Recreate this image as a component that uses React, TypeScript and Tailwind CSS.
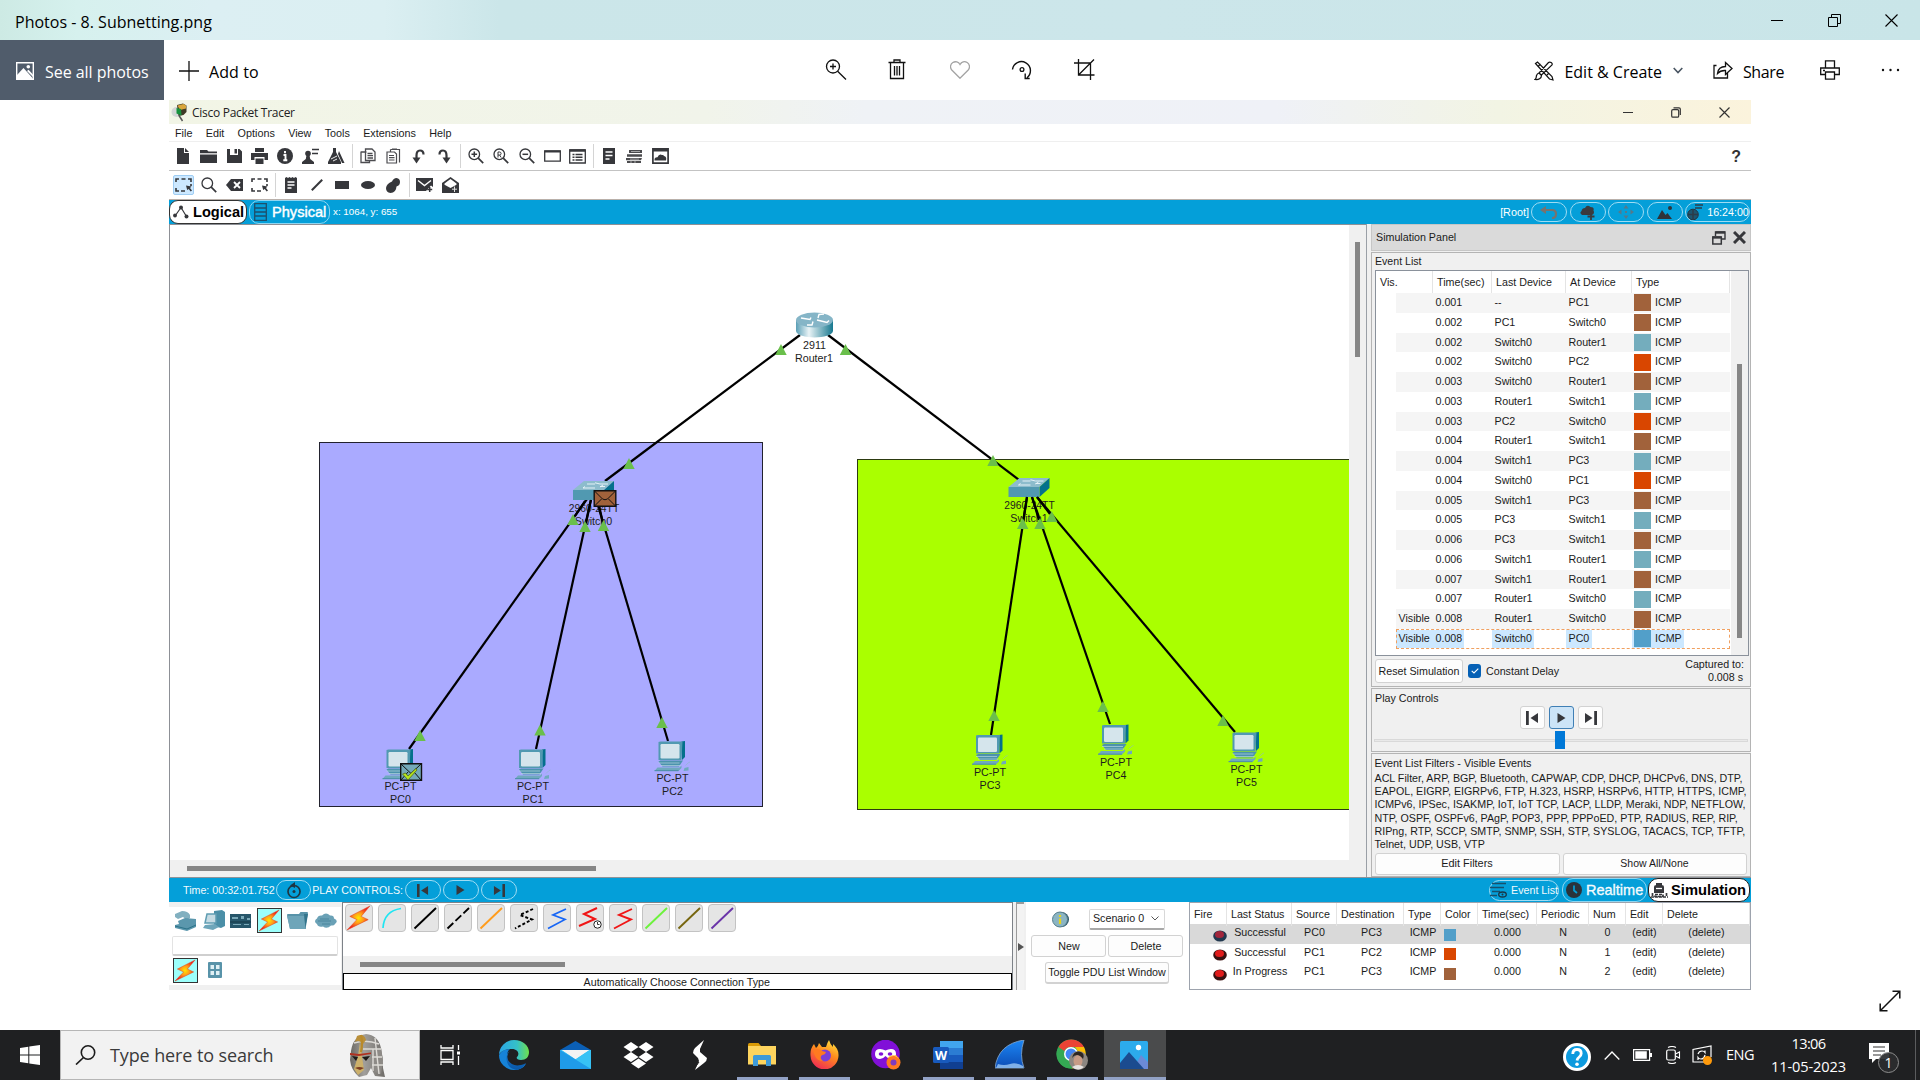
import React from 'react';

type Kids = { children?: React.ReactNode; className?: string };

/* ---------- shared bits ---------- */

const Svg = ({ w, h, vb, className = '', children }: { w: number; h: number; vb?: string; className?: string; children: React.ReactNode }) => (
  <svg width={w} height={h} viewBox={vb ?? `0 0 ${w} ${h}`} fill="none" className={`shrink-0 ${className}`}>
    {children}
  </svg>
);

const Slot = ({ children, className = '' }: Kids) => (
  <div className={`flex h-full w-[25.5px] shrink-0 items-center justify-center ${className}`}>{children}</div>
);
const Sep = () => (
  <div className="flex h-full w-[6px] shrink-0 items-center justify-center">
    <div className="h-[24px] w-px bg-[#d4d4d4]" />
  </div>
);

const D = '#36373b';

/* ---------- Photos window ---------- */

function TitleBar() {
  return (
    <div className="flex h-[40px] items-center justify-between bg-[linear-gradient(90deg,#cdeae4_0%,#d6f1ee_4%,#dceff3_11%,#dbeff2_20%,#cbe6e9_26%,#cce6ea_60%,#c9e5e8_100%)] pl-[15px]">
      <span className="mt-[3px] text-[16px] leading-none tracking-[0.01px]">Photos - 8. Subnetting.png</span>
      <div className="flex items-center pr-[0.500px]">
        <div className="flex w-[57px] justify-center"><div className="h-px w-[12px] bg-black" /></div>
        <div className="flex w-[57px] justify-center">
          <Svg w={13} h={13}><path d="M.5 3.500h9v9h-9zM3.500 3.500V.5h9v9h-3" stroke="#000" /></Svg>
        </div>
        <div className="flex w-[57px] justify-center">
          <Svg w={13} h={13}><path d="M.5 .5l12 12M12.500 .5l-12 12" stroke="#000" strokeWidth="1.100" /></Svg>
        </div>
      </div>
    </div>
  );
}

function PhotosToolbar() {
  return (
    <div className="flex h-[60px] bg-white">
      <div className="flex w-[164px] items-center bg-[#505c6b] pl-[16px] text-white">
        <Svg w={18} h={18} className="mt-[1px]">
          <path d="M.7.7h16.600v16.600H.7z" stroke="#fff" strokeWidth="1.400" />
          <path d="M1 13l6.500-7 9.500 10.500-2 .8H1z" fill="#fff" />
          <circle cx="12.300" cy="4.800" r="1.800" fill="#fff" />
          <path d="M11 9l1.500-1.300L17 12.500V15z" fill="#fff" />
        </Svg>
        <span className="ml-[11px] mt-[4px] whitespace-nowrap text-[16px] leading-none tracking-[-0.04px]">See all photos</span>
      </div>
      <div className="flex w-[648px] items-center pl-[15px]">
        <Svg w={20} h={20} className="mt-[2px]"><path d="M10 0v20M0 10h20" stroke="#111" strokeWidth="1.300" /></Svg>
        <span className="ml-[10px] mt-[4px] text-[16px] leading-none tracking-[0.1px]">Add to</span>
      </div>
      <div className="flex items-center pb-[1px]">
        <div className="flex w-[47px] justify-center">
          <Svg w={22} h={21}>
            <circle cx="8" cy="7.500" r="6.500" stroke="#111" strokeWidth="1.300" />
            <path d="M5 7.500h6M8 4.500v6M12.600 12.200L21 20.500" stroke="#111" strokeWidth="1.300" />
          </Svg>
        </div>
        <div className="flex w-[76px] justify-center">
          <Svg w={18} h={21}>
            <path d="M.5 3.500h17M6 3V1h6v2M2.500 4v15.500h13V4M6.500 7v9.500M9 7v9.500M11.500 7v9.500" stroke="#111" strokeWidth="1.300" />
          </Svg>
        </div>
        <div className="flex w-[50px] justify-center">
          <Svg w={20} h={18}>
            <path d="M10 17.200L1.800 9C-.3 6.500.3 3 2.800 1.500 5.500 0 8.500.8 10 3.500 11.500.8 14.500 0 17.200 1.500 19.700 3 20.300 6.500 18.200 9z" stroke="#a3a3a3" strokeWidth="1.300" />
          </Svg>
        </div>
        <div className="flex w-[74px] justify-center">
          <Svg w={22} h={21}>
            <path d="M1.500 10.500a9 9 0 1 1 14.500 8.200M14.200 14.500v5h4.500" stroke="#111" strokeWidth="1.400" />
            <circle cx="11" cy="10.500" r="1.900" stroke="#111" strokeWidth="1.300" />
          </Svg>
        </div>
        <div className="flex w-[50px] justify-center">
          <Svg w={21} h={21}>
            <path d="M4.500 0v16h16M0 4h16.500v17M4.500 16L20 .5" stroke="#111" strokeWidth="1.300" />
          </Svg>
        </div>
      </div>
      <div className="ml-auto flex items-center pr-[19px]">
        <Svg w={20} h={20} className="mt-[2px]">
          <path d="M1.500 2.500L3.500 1l14.500 14.500 1 3.500-3.500-1zM14.500 1.500c1.500-1.200 4.500.5 3.500 2.500L7.500 14 5 12zM5 12l2.500 2.500c0 3-3 4.500-6.500 4 1.500-1 1-2 1.500-4 .5-1.500 1.500-2.300 2.500-2.500zM4.500 5l2-2M13 14l2-2" stroke="#111" strokeWidth="1.200" />
        </Svg>
        <span className="ml-[10px] mt-[4px] whitespace-nowrap text-[16px] leading-none">Edit &amp; Create</span>
        <Svg w={10} h={7} className="ml-[11px]"><path d="M.7 1l4.300 4.500L9.300 1" stroke="#4a5663" strokeWidth="1.600" /></Svg>
        <Svg w={20} h={18} className="ml-[30px]">
          <path d="M3.500 4.500H1v12.500h13.500V12M4.500 12.500C5 8 8 5.500 12.500 5.500V1.500l6.500 6-6.500 6V9.500c-3.500-.2-6 .8-8 3z" stroke="#111" strokeWidth="1.300" />
        </Svg>
        <span className="ml-[10px] mt-[4px] text-[16px] leading-none tracking-[-0.4px]">Share</span>
        <Svg w={20} h={20} className="ml-[36px]">
          <path d="M5.500 8V.8h9V8M5 14.500H.7V8h18.600v6.500H15M5.500 12h9v7.200h-9zM3 10.500h2" stroke="#111" strokeWidth="1.300" />
        </Svg>
        <Svg w={20} h={4} className="ml-[41px]">
          <circle cx="2" cy="2" r="1.200" fill="#111" /><circle cx="9.500" cy="2" r="1.200" fill="#111" /><circle cx="17" cy="2" r="1.200" fill="#111" />
        </Svg>
      </div>
    </div>
  );
}

/* ---------- Packet Tracer chrome ---------- */

function TracerTitle() {
  return (
    <div className="flex h-[24px] shrink-0 items-center bg-[linear-gradient(90deg,#f2f5e6_0%,#f1f4ea_34%,#eff2f6_44%,#eff1f7_70%,#f2f4e4_84%,#fbf3dc_100%)] pl-[2px]">
      <Svg w={16} h={19}>
        <circle cx="5.500" cy="9" r="5" fill="#d3d6d6" />
        <path d="M6 2l6-1.500 3.500 2v6.500l-3 3-5 1z" fill="#3f3a26" />
        <path d="M6.500 2.500l6-1.500 2.500 1.500v3l-6 1.500z" fill="#d9a63c" />
        <path d="M5.500 5l4.500 1 .5 6.500-5-2z" fill="#16923d" />
        <path d="M8 12.500l3.500 5.500" stroke="#555" strokeWidth="1.500" />
      </Svg>
      <span className="ml-[5px] mt-[1px] text-[12px] leading-none tracking-[-0.28px] text-[#222] [font-family:'Open_Sans',sans-serif]">Cisco Packet Tracer</span>
      <div className="ml-auto flex items-center pr-[3px]">
        <div className="flex w-[48px] justify-center"><div className="h-px w-[10px] bg-[#333]" /></div>
        <div className="flex w-[48px] justify-center">
          <Svg w={10} h={11}><rect x=".7" y="2.700" width="7" height="7.500" rx="1.300" stroke="#333" strokeWidth="1.200" /><path d="M2.500 .8h5.500q1.300 0 1.300 1.300V8" stroke="#333" strokeWidth="1.200" /></Svg>
        </div>
        <div className="flex w-[48px] justify-center">
          <Svg w={11} h={11}><path d="M.5 .5l10 10M10.500 .5l-10 10" stroke="#333" strokeWidth="1.200" /></Svg>
        </div>
      </div>
    </div>
  );
}

function MenuBar() {
  return (
    <div className="flex h-[18px] shrink-0 items-center gap-[13.3px] border-b border-[#efefef] bg-white pl-[6px] pt-[2px] text-[10.8px] leading-none">
      {['File', 'Edit', 'Options', 'View', 'Tools', 'Extensions', 'Help'].map((m) => (
        <span key={m}>{m}</span>
      ))}
    </div>
  );
}

const Lens = ({ children }: Kids) => (
  <Svg w={16} h={16}>
    <circle cx="6.300" cy="6.300" r="5.300" stroke={D} strokeWidth="1.300" />
    <path d="M10.200 10.200l5 5" stroke={D} strokeWidth="1.700" />
    {children}
  </Svg>
);

function ToolRowOne() {
  return (
    <div className="flex h-[29px] shrink-0 items-center border-b border-[#c3c3c3] bg-white pl-[1.500px]">
      <Slot><Svg w={12} h={16}><path d="M0 0h7v5h5v11H0zM8 0l4 4H8z" fill={D} /></Svg></Slot>
      <Slot><Svg w={17} h={13}><path d="M0 0h7l1.500 1.500H17v1.800H0zM0 4.500h17V13H0z" fill={D} /></Svg></Slot>
      <Slot><Svg w={15} h={14}><path d="M0 0h3v6h8V0h1.500L15 2.500V14H0zM7.500 0H10v4.500H7.500z" fill={D} /></Svg></Slot>
      <Slot><Svg w={17} h={16}><path d="M4 0h9v4H4zM0 5h17v7h-3.500V9h-10v3H0zM4.500 10.500h8V16h-8z" fill={D} /></Svg></Slot>
      <Slot><Svg w={16} h={16}><circle cx="8" cy="8" r="8" fill={D} /><path d="M8 3v2.200M6.500 7H8.500v5M6.300 12.300h4" stroke="#fff" strokeWidth="1.900" /></Svg></Slot>
      <Slot><Svg w={17} h={16}><circle cx="6" cy="5.500" r="2.800" fill={D} /><path d="M4.500 7h3l.7 4 3.800 3v2H0v-2l3.800-3z" fill={D} /><path d="M10 1.500h7M10 5.500h6" stroke={D} strokeWidth="1.400" /></Svg></Slot>
      <Slot><Svg w={17} h={16}><path d="M5 0h3v4l5 10v2H0v-2L5 4zM11 3l5.500 12h-2.500L10 6z" fill={D} /><path d="M3 11l6-3M5 13l4-2" stroke="#fff" strokeWidth=".9" /></Svg></Slot>
      <Sep />
      <Slot><Svg w={16} h={16}><path d="M1 4h5.500M1 3.500v11h8.500V12M5.500 1H12l3 3v8.500H5.500zM7.500 5.500h5M7.500 7.700h5.500M7.500 10h5.500" stroke="#4c4c50" strokeWidth="1.300" /></Svg></Slot>
      <Slot><Svg w={15} h={16}><path d="M4.500 1.500h9v13M4.500 1.500V4M1 4h7.500l2 2v9H1zM3 7.500h5M3 9.700h5.500M3 12h5.500M6 0h5" stroke="#4c4c50" strokeWidth="1.200" /></Svg></Slot>
      <Slot><Svg w={13} h={15}><path d="M4.500 10V6.500Q4.500 1.500 8 1.500t3.500 4" stroke={D} strokeWidth="2.200" /><path d="M.5 8.500h8L4.500 14.500z" fill={D} /></Svg></Slot>
      <Slot><Svg w={13} h={15}><path d="M8.500 10V6.500Q8.500 1.500 5 1.500t-3.500 4" stroke={D} strokeWidth="2.200" /><path d="M12.500 8.500h-8l4 6z" fill={D} /></Svg></Slot>
      <Sep />
      <Slot><Lens><path d="M3.500 6.300h5.600M6.300 3.500v5.600" stroke={D} strokeWidth="1.500" /></Lens></Slot>
      <Slot><Lens><path d="M5 9.500V4h1.600q1.500.1 1.500 1.500T6.600 7H5M6.600 7l1.600 2.500" stroke={D} /></Lens></Slot>
      <Slot><Lens><path d="M3.500 6.300h5.600" stroke={D} strokeWidth="1.500" /></Lens></Slot>
      <Slot><Svg w={17} h={12}><path d="M.7 1h15.600v10.200H.7z" stroke={D} strokeWidth="1.300" /><path d="M.5 1.500h16" stroke={D} strokeWidth="2" /></Svg></Slot>
      <Slot><Svg w={17} h={15}><path d="M.7 1h15.600v13H.7z" stroke={D} strokeWidth="1.300" /><path d="M.5 1.500h16" stroke={D} strokeWidth="2.500" /><path d="M3.500 5.500h2M6.500 5.500h7M3.500 8.200h2M6.500 8.200h7M3.500 11h2M6.500 11h7" stroke={D} strokeWidth="1.500" /></Svg></Slot>
      <Sep />
      <Slot><Svg w={12} h={16}><path d="M0 0h12v16H0z" fill={D} /><path d="M2.500 4h7M2.500 7.500h7M2.500 11h4" stroke="#fff" strokeWidth="1.500" /></Svg></Slot>
      <Slot><Svg w={17} h={13}><path d="M3 0h13v3H3zM1 4.300h15v2.500H1zM0 8h16l-1 2.200H0zM1 11h14v2H1z" fill="#4b4b4e" /><path d="M5 1.500h9M4 9.100h9M5 11v2M9 11v2" stroke="#bdbdbd" strokeWidth=".8" /></Svg></Slot>
      <Slot><Svg w={17} h={16}><path d="M.9.900h15.200v14.200H.9z" stroke={D} strokeWidth="1.700" /><path d="M1 2h15" stroke={D} strokeWidth="3" /><path d="M2.500 12.500q-.3-3.500 3-3.300Q7 5.500 10 7q1.500-.5 2 1 3 .5 2 4.500z" fill={D} /></Svg></Slot>
      <span className="ml-auto mr-[10px] mt-[1px] text-[16px] font-bold leading-none text-[#333]">?</span>
    </div>
  );
}

const Marquee = () => (
  <Svg w={17} h={14}>
    <path d="M1 4V1h3M6.500 1h4M13 1h3v3M1 10v3h3M6 13h4M16 6v2" stroke={D} strokeWidth="1.600" />
    <path d="M11 7.500l5.500 1-1.500 1.500 2 2.500-1.300 1-2-2.500-1.500 1z" fill={D} />
  </Svg>
);

function ToolRowTwo() {
  return (
    <div className="flex h-[29px] shrink-0 items-center border-b border-[#b9b0aa] bg-white pl-[1.500px]">
      <Slot><div className="flex h-[20px] w-[21px] items-center justify-center rounded-[2px] border border-[#9fcdf3] bg-[#cce8ff]"><Marquee /></div></Slot>
      <Slot><Lens /></Slot>
      <Slot><Svg w={17} h={12}><path d="M5 0h12v12H5L0 6z" fill={D} /><path d="M8 3l6 6M14 3L8 9" stroke="#fff" strokeWidth="1.800" /></Svg></Slot>
      <Slot><Marquee /></Slot>
      <Sep />
      <Slot><Svg w={12} h={16}><path d="M0 1l1.500-1L3 1l1.500-1L6 1l1.500-1L9 1l1.500-1L12 1v15H0z" fill={D} /><path d="M2.500 5h7M2.500 8h7M2.500 11h4" stroke="#fff" strokeWidth="1.400" /></Svg></Slot>
      <Slot><Svg w={12} h={12}><path d="M.8 11.200L11.200.8" stroke={D} strokeWidth="2" /></Svg></Slot>
      <Slot><div className="h-[8px] w-[14px] bg-[#36373b]" /></Slot>
      <Slot><div className="h-[8px] w-[14px] rounded-[50%] bg-[#36373b]" /></Slot>
      <Slot><Svg w={14} h={15}><path d="M6 3.500q1.500-3.500 4.500-3.500 3.500.5 3.500 4t-3.500 4.500Q10 15 4.500 15 0 14.500 0 10 .5 5.500 6 3.500z" fill={D} /></Svg></Slot>
      <Sep />
      <Slot><Svg w={17} h={14}><path d="M0 0h17v9l-2-1.500L10 13H0z" fill={D} /><path d="M2 2.500l6.500 5 6.500-5" stroke="#fff" strokeWidth="1.400" /><path d="M13.700 9v5M11.200 11.500h5" stroke={D} strokeWidth="1.500" /></Svg></Slot>
      <Slot><Svg w={17} h={16}><path d="M8.500 0L17 6v10H0V6z" fill={D} /><path d="M2.500 6.500l6-4.500 6 4.500v1.200l-6 3.300-6-3.300z" fill="#fff" /><path d="M12.500 9.500v5.500M10 12.200h5" stroke="#ddd" strokeWidth="1" /></Svg></Slot>
    </div>
  );
}

const Pill = ({ children, className = '' }: Kids) => (
  <div className={`flex shrink-0 items-center justify-center rounded-full border border-[#9fdcf3] ${className}`}>{children}</div>
);

function ViewBar() {
  return (
    <div className="flex h-[24px] shrink-0 items-center bg-[#049fd9] text-white">
      <div className="flex h-[24px] w-[78px] items-center rounded-[9px] border border-[#333] bg-white pl-[3px] text-black">
        <Svg w={16} h={14}><path d="M2 11L8 2.500l5.500 9" stroke={D} strokeWidth="1.200" /><circle cx="2" cy="10.500" r="1.900" fill={D} /><circle cx="8" cy="2.500" r="2" fill={D} /><circle cx="13.500" cy="11.500" r="2" fill={D} /></Svg>
        <span className="ml-[4px] mt-[1px] text-[14.6px] font-bold leading-none">Logical</span>
      </div>
      <div className="ml-[2px] flex h-[24px] w-[81px] items-center rounded-[10px] border border-[#8ed6f2] pl-[4px]">
        <Svg w={13} h={18}><path d="M.7.700h11.600v16.600H.7zM1 5h11M1 9h11M1 13h11" stroke="#1d4f6b" strokeWidth="1.300" /></Svg>
        <span className="ml-[5px] mt-[1px] text-[14.6px] leading-none [-webkit-text-stroke:0.4px_white]">Physical</span>
      </div>
      <span className="ml-[3px] whitespace-nowrap text-[9.8px] leading-none">x: 1064, y: 655</span>
      <div className="ml-auto flex items-center pr-[1px]">
        <span className="text-[10.8px] leading-none">[Root]</span>
        <Pill className="ml-[2px] h-[20px] w-[36px]"><Svg w={18} h={13}><path d="M5 4h7q4 0 4 4t-4 4" stroke="#77736f" strokeWidth="2.200" /><path d="M6 0v8L0 4z" fill="#77736f" /></Svg></Pill>
        <Pill className="ml-[2.700px] h-[20px] w-[36px]"><Svg w={18} h={15}><path d="M3 10Q0 8 2.500 6 3 3 6 3q2-4 5.500-1 4 0 3 3.500Q16 9 13 10z" fill="#3a3a3e" /><path d="M12 8v7M8.500 11.500h7" stroke="#3a3a3e" strokeWidth="1.800" /></Svg></Pill>
        <Pill className="ml-[2.700px] h-[20px] w-[36px]"><Svg w={16} h={14}><path d="M8 0l2.500 3.500h-5zM8 14l2.500-3.500h-5zM0 7l3.500-2.500v5zM16 7l-3.500-2.500v5zM7 6h2v2H7z" fill="#56798a" /></Svg></Pill>
        <Pill className="ml-[2.700px] h-[20px] w-[36px]"><Svg w={16} h={13}><path d="M0 13L5 4l3.500 5L10.500 7 15 13z" fill="#2f3338" /><circle cx="13" cy="2" r="2" fill="#2f3338" /></Svg></Pill>
        <Pill className="ml-[2px] h-[20px] w-[65px] gap-[3px]">
          <Svg w={18} h={16}><circle cx="7" cy="10.500" r="5.300" fill="#1d566f" stroke="#24343f" /><path d="M2 10.500h10M7 5.500v10M9 4h7M9 1h8" stroke="#2c3c48" strokeWidth="1.500" /></Svg>
          <span className="text-[10.7px] leading-none">16:24:00</span>
        </Pill>
      </div>
    </div>
  );
}

/* ---------- Topology canvas ---------- */

/* Drawing coordinates are desktop pixels; the viewBox starts at the canvas corner. */
const LINKS: [number, number, number, number][] = [
  [800, 335, 605, 481], [828, 335, 1019, 480],
  [587, 499, 409, 749], [591, 499, 536, 749], [597, 502, 668, 741],
  [1027, 497, 991, 735], [1032, 497, 1110, 724], [1037, 497, 1235, 732],
];
const UP: [number, number][] = [
  [781, 350], [845.5, 350], [629, 464], [573, 520], [585, 527], [603.5, 526], [420, 736], [540, 730.5], [662, 723],
  [993, 461], [1022.7, 524], [1040, 524], [1051.7, 517], [994, 716], [1103, 707], [1223, 721],
];
const PCS: [number, number, string][] = [
  [386.5, 749.5, 'PC0'], [519, 749.5, 'PC1'], [658.5, 741.5, 'PC2'], [976, 735, 'PC3'], [1102, 725, 'PC4'], [1232.5, 732.5, 'PC5'],
];

const Caption = ({ x, y, size = 10.7, children }: { x: number; y: number; size?: number; children: string }) => (
  <text x={x} y={y} textAnchor="middle" fontSize={size} fill="#1c1c1c">{children}</text>
);

const Pc = ({ x, y, name }: { x: number; y: number; name: string }) => (
  <g>
    <g transform={`translate(${x} ${y})`}>
      <path d="M23 0l3.500-.5v16l-3 3z" fill="#04708c" />
      <path d="M0 .500L2 0h22l-1 18.500H0z" fill="#5199b1" />
      <rect x="2" y="2.500" width="19" height="14.500" rx="1.200" fill="#d5e5ec" />
      <path d="M0 20l2-1h22.500l-4 6H4z" fill="#4b93ad" />
      <path d="M0 21.500h21M2 24h20" stroke="#b7d5e0" strokeWidth=".7" />
      <path d="M-1 26h22l2-2v2.500L20 29.500H-4z" fill="#6fa9be" />
      <path d="M-4 29.200h24" stroke="#4b8ca5" />
      <path d="M26 26.500l4-1v3.500l-5 .5z" fill="#6fa9be" />
      <path d="M27 24q3-3.500 4.500-3.500" stroke="#8bb9ca" strokeWidth=".6" />
    </g>
    <Caption x={x + 14} y={y + 40.500}>PC-PT</Caption>
    <Caption x={x + 14} y={y + 53.500}>{name}</Caption>
  </g>
);

const Switch = ({ x, y, name }: { x: number; y: number; name: string }) => (
  <g>
    <g transform={`translate(${x} ${y})`}>
      <path d="M0 9L11 0h30L31 9z" fill="#8dbccc" />
      <path d="M31 9L41 0v10L31 19z" fill="#04708c" />
      <path d="M0 9h31v10H0z" fill="#5199b1" />
      <path d="M14 3h8M22 1.800l5 1.200h8M27 5.500h5M10 7h12M30 4l-3 2M12 5.500l-2 1.500" stroke="#eef7fa" strokeWidth=".9" />
    </g>
    <Caption x={x + 21} y={y + 30.500} size={10.3}>2960-24TT</Caption>
    <Caption x={x + 20.500} y={y + 43.800}>{name}</Caption>
  </g>
);

function Canvas() {
  return (
    <div className="flex min-w-0 flex-1 flex-col border-l border-t border-[#8d9096]">
      <div className="flex min-h-0 flex-1">
        <svg width="1179" height="635" viewBox="170 225 1179 635" fill="none" className="shrink-0 bg-white">
          <defs>
            <linearGradient id="can" x1="0" x2="1">
              <stop offset="0" stopColor="#5a9fb6" /><stop offset=".35" stopColor="#e9f3f6" /><stop offset="1" stopColor="#16788f" />
            </linearGradient>
          </defs>
          <rect x="319.500" y="442.500" width="443" height="364" fill="#aaaaff" stroke="#22222e" />
          <rect x="857.500" y="459.500" width="520" height="350" fill="#aaff00" stroke="#2c3a10" />
          <g stroke="#000" strokeWidth="2.200">
            {LINKS.map(([a, b, c, d]) => <path key={`${a}-${c}`} d={`M${a} ${b}L${c} ${d}`} />)}
          </g>
          <path d="M796 320v11c1 8.500 36 8.500 37 0v-11z" fill="url(#can)" />
          <ellipse cx="814.500" cy="320" rx="18.500" ry="7.500" fill="#85b5c7" />
          <path d="M801 318l9 1.500 1-2M818 318l1-3.500 5-.5M813 321.500l-1 3.500-5 0M817 320l10 2.500 2-2" stroke="#fff" strokeWidth="1.400" />
          <Caption x={814.500} y={349}>2911</Caption>
          <Caption x={814} y={362}>Router1</Caption>
          <Switch x={573} y={481} name="Switch0" />
          <Switch x={1008.500} y={478} name="Switch1" />
          <g stroke="#000" strokeWidth="2.200">
            <path d="M585 501L575 516M591 500L586 523M599 505L603 524M1027 497L1023 522M1032 497L1039 520M1037 497L1050 514" />
          </g>
          {PCS.map(([x, y, n]) => <Pc key={n} x={x} y={y} name={n} />)}
          {UP.map(([x, y]) => <path key={`${x}`} d={`M${x} ${y - 6}l5.700 11h-11.400z`} fill="#6abf4b" />)}
          <g transform="translate(593.500 490)">
            <path d="M.7.700h21.600v15.600H.7z" fill="#a1623b" stroke="#111" strokeWidth="1.400" />
            <path d="M1 1l8 8q2.500 1.500 5 0l8-8M1 16l7-7M22 16l-7-7" stroke="#111" strokeWidth="1" />
          </g>
          <g transform="translate(400 763)">
            <path d="M.7.700h20.800v16.600H.7z" fill="#74a9b8" stroke="#111" strokeWidth="1.400" />
            <path d="M1 1l10 9.500L21 1M1 17l7-8M21 17l-7-8" stroke="#111" strokeWidth="1" />
            <path d="M2.500 11l3-1 2.500 3 8-7.500 1 1.500-9 10z" fill="#b5e61d" stroke="#4c5c15" strokeWidth=".7" />
          </g>
        </svg>
        <div className="flex flex-1 justify-center bg-[#f0f0f0] pt-[17px]">
          <div className="h-[115px] w-[5px] bg-[#868686]" />
        </div>
      </div>
      <div className="flex h-[17px] shrink-0 items-center bg-[#f0f0f0] pl-[17px]">
        <div className="h-[5px] w-[409px] bg-[#868686]" />
      </div>
    </div>
  );
}

/* ---------- Simulation panel ---------- */

const BROWN = 'bg-[#a1623b]';
const TEAL = 'bg-[#74adbd]';
const ORANGE = 'bg-[#d94600]';
const BLUE = 'bg-[#529fc9]';

const EVENTS: [string, string, string, string, string][] = [
  ['', '0.001', '--', 'PC1', BROWN],
  ['', '0.002', 'PC1', 'Switch0', BROWN],
  ['', '0.002', 'Switch0', 'Router1', TEAL],
  ['', '0.002', 'Switch0', 'PC2', ORANGE],
  ['', '0.003', 'Switch0', 'Router1', BROWN],
  ['', '0.003', 'Router1', 'Switch1', TEAL],
  ['', '0.003', 'PC2', 'Switch0', ORANGE],
  ['', '0.004', 'Router1', 'Switch1', BROWN],
  ['', '0.004', 'Switch1', 'PC3', TEAL],
  ['', '0.004', 'Switch0', 'PC1', ORANGE],
  ['', '0.005', 'Switch1', 'PC3', BROWN],
  ['', '0.005', 'PC3', 'Switch1', TEAL],
  ['', '0.006', 'PC3', 'Switch1', BROWN],
  ['', '0.006', 'Switch1', 'Router1', TEAL],
  ['', '0.007', 'Switch1', 'Router1', BROWN],
  ['', '0.007', 'Router1', 'Switch0', TEAL],
  ['Visible', '0.008', 'Router1', 'Switch0', BROWN],
  ['Visible', '0.008', 'Switch0', 'PC0', BLUE],
];

const FILTERS = [
  'ACL Filter, ARP, BGP, Bluetooth, CAPWAP, CDP, DHCP, DHCPv6, DNS, DTP,',
  'EAPOL, EIGRP, EIGRPv6, FTP, H.323, HSRP, HSRPv6, HTTP, HTTPS, ICMP,',
  'ICMPv6, IPSec, ISAKMP, IoT, IoT TCP, LACP, LLDP, Meraki, NDP, NETFLOW,',
  'NTP, OSPF, OSPFv6, PAgP, POP3, PPP, PPPoED, PTP, RADIUS, REP, RIP,',
  'RIPng, RTP, SCCP, SMTP, SNMP, SSH, STP, SYSLOG, TACACS, TCP, TFTP,',
  'Telnet, UDP, USB, VTP',
];

const Btn = ({ children, className = '', pressed }: Kids & { pressed?: boolean }) => (
  <div className={`flex shrink-0 items-center justify-center whitespace-nowrap rounded-[3px] border leading-none ${pressed ? 'border-[#3f7fb5] bg-[#cce4f7]' : 'border-[#d2d2d2] bg-[#fdfdfd]'} ${className}`}>{children}</div>
);

const Back = ({ s = 12 }: { s?: number }) => <Svg w={s + 1} h={s + 2} vb="0 0 13 14"><path d="M0 0h2.800v14H0z" fill={D} /><path d="M12 2v10L4.500 7z" fill={D} /></Svg>;
const Play = () => <Svg w={9} h={10}><path d="M.5 0v10L8.500 5z" fill={D} /></Svg>;
const Fwd = ({ s = 12 }: { s?: number }) => <Svg w={s + 1} h={s + 2} vb="0 0 13 14"><path d="M10.200 0H13v14h-2.800z" fill={D} /><path d="M1 2v10l7.500-5z" fill={D} /></Svg>;

function EventTable() {
  return (
    <div className="ml-[3px] flex h-[386px] w-[374px] shrink-0 border border-[#8a919b] bg-white">
      <div className="w-[355px] shrink-0">
        <div className="grid h-[22px] grid-cols-[57px_59px_74px_66px_98px] items-stretch leading-[22px] [&>span]:border-r [&>span]:border-[#e4e4e4]">
          <span className="pl-[4px]">Vis.</span>
          <span className="pl-[4px] tracking-[0.05px]">Time(sec)</span>
          <span className="pl-[4px]">Last Device</span>
          <span className="pl-[4px]">At Device</span>
          <span className="pl-[4px]">Type</span>
        </div>
        {EVENTS.map(([vis, time, last, at, color], i) => {
          const sel = i === EVENTS.length - 1;
          const hl = sel ? 'bg-[#cce8ff]' : '';
          return (
            <div
              key={i}
              className={`ml-[20px] grid h-[19.770px] w-[334px] grid-cols-[37px_59px_74px_66px_98px] items-center text-[10.7px] leading-[19.770px] ${i % 2 === 0 ? 'bg-[#f5f5f5]' : 'bg-white'} ${sel ? 'outline-1 -outline-offset-1 outline-dashed outline-[#f0a060]' : ''}`}
            >
              <span className={`flex h-[18px] items-center pl-[2.500px] ${hl}`}>{vis}</span>
              <span className="flex h-[18px]"><span className={`flex items-center pl-[2.500px] pr-[2px] ${hl}`}>{time}</span></span>
              <span className="flex h-[18px]"><span className={`flex items-center px-[2.500px] ${hl}`}>{last}</span></span>
              <span className="flex h-[18px]"><span className={`flex items-center px-[2.500px] ${hl}`}>{at}</span></span>
              <span className="flex h-[18px]">
                <span className={`flex items-center gap-[4px] pl-[2px] pr-[2px] ${hl}`}>
                  <span className={`h-[17px] w-[17px] ${color}`} />ICMP
                </span>
              </span>
            </div>
          );
        })}
      </div>
      <div className="flex w-[17px] shrink-0 justify-center bg-[#f0f0f0] pt-[93px]">
        <div className="h-[274px] w-[5px] bg-[#868686]" />
      </div>
    </div>
  );
}

function SimulationPanel() {
  return (
    <div className="flex w-[385px] shrink-0 flex-col border-l border-[#9a9fa6] bg-[#f0f0f0] pl-[4px] text-[10.7px]">
      <div className="flex h-[27px] shrink-0 items-center border border-[#c6c6c6] bg-[#dadada] pl-[4px]">
        <span>Simulation Panel</span>
        <div className="ml-auto flex items-center gap-[7px] pr-[4px]">
          <Svg w={14} h={14}><path d="M3.500 5V1h9.500v7H10" stroke={D} strokeWidth="1.400" /><path d="M3.500 1.500H13" stroke={D} strokeWidth="2.400" /><path d="M.8 6h8.500v7H.8z" stroke={D} strokeWidth="1.500" /><path d="M.5 6.500h9" stroke={D} strokeWidth="2.300" /></Svg>
          <Svg w={13} h={13}><path d="M1 1l11 11M12 1L1 12" stroke={D} strokeWidth="3" /></Svg>
        </div>
      </div>
      <div className="mt-[1px] flex h-[435px] shrink-0 flex-col border border-[#b4b4b4]">
        <span className="flex h-[17px] shrink-0 items-center pl-[3px] text-[10.6px]">Event List</span>
        <EventTable />
        <div className="flex flex-1 items-center pl-[3px]">
          <Btn className="h-[24px] w-[88px]">Reset Simulation</Btn>
          <div className="ml-[5px] flex h-[14px] w-[13px] items-center justify-center rounded-[3px] bg-[#0560b5]">
            <Svg w={8} h={6}><path d="M.7 2.800L3 5l4.300-4.300" stroke="#fff" strokeWidth="1.100" /></Svg>
          </div>
          <span className="ml-[5px]">Constant Delay</span>
          <div className="ml-auto flex flex-col items-end pr-[6px] leading-[13px]">
            <span>Captured to:</span>
            <span className="pr-[1px]">0.008 s</span>
          </div>
        </div>
      </div>
      <div className="mt-px flex h-[64px] shrink-0 flex-col border border-[#b4b4b4]">
        <span className="flex h-[17px] shrink-0 items-center pl-[3px] pt-[2px]">Play Controls</span>
        <div className="flex gap-[4px] pl-[148px]">
          <Btn className="h-[23px] w-[25px]"><Back /></Btn>
          <Btn pressed className="h-[23px] w-[25px]"><Play /></Btn>
          <Btn className="h-[23px] w-[25px]"><Fwd /></Btn>
        </div>
        <div className="mx-[2px] mt-[2px] flex h-[18px] items-center">
          <div className="h-[3px] flex-1 border border-[#d9d9d9] bg-[#e9e9e9]" />
          <div className="h-[18px] w-[10px] bg-[#0078d7]" />
          <div className="h-[3px] w-[183px] border border-[#d9d9d9] bg-[#e9e9e9]" />
        </div>
      </div>
      <div className="mt-px flex min-h-0 flex-1 flex-col border border-[#b4b4b4] pl-[2.500px]">
        <span className="flex h-[18px] shrink-0 items-center text-[10.8px]">Event List Filters - Visible Events</span>
        <div className="flex flex-col whitespace-nowrap leading-[13.200px]">
          {FILTERS.map((l) => <span key={l}>{l}</span>)}
        </div>
        <div className="mt-[1.500px] flex gap-[3px]">
          <Btn className="h-[22px] w-[185px] text-[10.9px]">Edit Filters</Btn>
          <Btn className="h-[22px] w-[184px] text-[10.5px]">Show All/None</Btn>
        </div>
      </div>
    </div>
  );
}

/* ---------- Lower bar and panels ---------- */

function TimeBar() {
  return (
    <div className="flex h-[24px] shrink-0 items-center bg-[#049fd9] pl-[14px] text-[10.7px] leading-none text-[#f1fafd]">
      <span className="whitespace-nowrap">Time: 00:32:01.752</span>
      <Pill className="ml-[1.500px] h-[20px] w-[35px]">
        <Svg w={16} h={17}><circle cx="8" cy="9.500" r="6" stroke="#1f3643" strokeWidth="1.700" /><circle cx="8" cy="9.500" r="1.500" fill="#1f3643" /><path d="M4 3.500L9 0v6z" fill="#1f3643" /></Svg>
      </Pill>
      <span className="ml-[1px] whitespace-nowrap text-[10.6px]">PLAY CONTROLS:</span>
      <Pill className="ml-[1.500px] h-[20px] w-[36px]"><Back s={11} /></Pill>
      <Pill className="ml-[2px] h-[20px] w-[36px]"><Play /></Pill>
      <Pill className="ml-[2px] h-[20px] w-[36px]"><Fwd s={11} /></Pill>
      <div className="ml-auto flex h-full items-center pr-[1px]">
        <Pill className="h-[21px] w-[70px] gap-[4px]">
          <Svg w={17} h={16}><path d="M2 1.500h14M0 5.500h14M2 9.500h8M0 13.500h7" stroke="#17506c" strokeWidth="1.600" /><ellipse cx="12.500" cy="12.500" rx="3.800" ry="2.500" stroke="#17384a" strokeWidth="1.300" /><circle cx="12.500" cy="12.500" r="1" fill="#17384a" /></Svg>
          <span className="whitespace-nowrap">Event List</span>
        </Pill>
        <div className="ml-[3px] flex h-[24px] w-[85px] items-center rounded-[11px] border border-[#8ed6f2] pl-[3px]">
          <Svg w={16} h={16}><circle cx="8" cy="8" r="8" fill="#2a333b" /><path d="M8 3.500V8.500l3 2.500" stroke="#049fd9" strokeWidth="1.700" /></Svg>
          <span className="ml-[4px] text-[14.5px] [-webkit-text-stroke:0.3px_white]">Realtime</span>
        </div>
        <div className="ml-[1px] flex h-[24px] w-[102px] items-center rounded-[10px] border border-[#222] bg-white pl-[2px] text-black">
          <Svg w={17} h={15}><path d="M5 0h6v2.500H5zM3 4q0-2 2-2h6q2 0 2 2v6H3z" fill={D} /><path d="M5 5.500h6" stroke="#fff" strokeWidth="1.300" /><path d="M1.500 10v3.500M0 14h17M15.500 10v3.500M4 11.500h8v2H4z" stroke={D} strokeWidth="1.700" strokeDasharray="3 1" /></Svg>
          <span className="ml-[3px] text-[14.7px] font-bold">Simulation</span>
        </div>
      </div>
    </div>
  );
}

const Bolt = ({ s = 24 }: { s?: number }) => (
  <svg width={s} height={s} viewBox="0 0 24 24" className="shrink-0">
    <defs>
      <radialGradient id="bolt"><stop offset="0" stopColor="#ffe900" /><stop offset=".45" stopColor="#ff9a1a" /><stop offset="1" stopColor="#f01c1c" /></radialGradient>
    </defs>
    <path d="M22 1L3.500 10.500l6.500 3L1 23l19.500-9.500-6.500-3z" fill="url(#bolt)" stroke="#e2451b" strokeWidth=".5" />
  </svg>
);

function DevicePicker() {
  return (
    <div className="flex w-[172px] shrink-0 flex-col border-y-[5px] border-[#f0f0f0] bg-white">
      <div className="flex h-[27px] items-center justify-between pl-[5px] pr-[4px]">
        <Svg w={23} h={20}><path d="M1 6V3l7-3q6 0 8 4v3l-3 2-4-3-5 2z" fill="#82b0c0" /><path d="M4 10l7-3 11 1v8l-9 4-12-3v-3l4-1z" fill="#5b97ad" /><path d="M1 15l12 3 9-4" stroke="#2b7288" /></Svg>
        <Svg w={22} h={21}><path d="M11 1l8-1 3 2v14l-4 2-7-2z" fill="#4b8fa7" /><path d="M4 4h9v9H2z" fill="#c6dbe3" stroke="#5f9db2" strokeWidth="1.500" /><path d="M2 15l10-1 4 3-6 3-10-2z" fill="#6ea6ba" /></Svg>
        <Svg w={21} h={16}><path d="M0 1h21v14H0z" fill="#27566a" /><path d="M2 4h6v2H2zM11 3h3v3h-3zM17 5h3v2h-3zM3 11h8v1H3zM14 11h5v1h-5z" fill="#7ba9b8" /><path d="M0 9h21" stroke="#163947" /></Svg>
        <div className="flex h-[25px] w-[25px] items-center justify-center border border-[#333] bg-[#9cfffb]"><Bolt s={23} /></div>
        <Svg w={21} h={17}><path d="M0 3q0-1 1-1h11l1.500-2H20q1 0 1 1l-3 16H3z" fill="#5893a9" /><path d="M0 4h17l2 13H3z" fill="#6ea5b9" /><path d="M17 2h4l-2.500 15z" fill="#34758c" /></Svg>
        <Svg w={23} h={15}><path d="M3 11Q-1 8 3 5.500 4 2 8 2.500q4-4 8 0 4-.5 4 3 5 2 1 5.500-1 2-4 1.500-4 4-8 1-5 1-6-2.500z" fill="#6aa1b6" /><path d="M6 6h9M4 8h13M8 11h8" stroke="#4a869d" /></Svg>
      </div>
      <div className="mx-[3px] mt-[2px] h-[20px] rounded-[2px] border border-b-2 border-[#e3e3e3] border-b-[#cfcfcf] bg-white" />
      <div className="flex flex-1 items-center pl-[4px]">
        <div className="flex h-[25px] w-[25px] items-center justify-center border border-[#333] bg-[#9cfffb]"><Bolt s={23} /></div>
        <Svg w={14} h={16} className="ml-[10px]"><rect width="14" height="16" rx="1" fill="#5893a9" /><path d="M2.500 3h3.500v4H2.500zM8 3h3.500v4H8zM2.500 9h3.500v4H2.500zM8 9h3.500v4H8z" fill="#dff0f5" /></Svg>
      </div>
    </div>
  );
}

const DIAG = 'M2.500 23.500L24 3';
const ZIG = 'M22 4L9 10l12 4.500L4 23.500';
const CABLES: React.ReactNode[] = [
  <Bolt s={26} />,
  <Svg w={26} h={26}><path d="M4 23Q5 6 22 3.500" stroke="#1fe5f2" strokeWidth="1.700" /></Svg>,
  <Svg w={26} h={26}><path d={DIAG} stroke="#000" strokeWidth="1.900" /></Svg>,
  <Svg w={26} h={26}><path d={DIAG} stroke="#000" strokeWidth="1.900" strokeDasharray="8 3" /></Svg>,
  <Svg w={26} h={26}><path d={DIAG} stroke="#ff9c1c" strokeWidth="1.900" /></Svg>,
  <Svg w={26} h={26}><path d={ZIG} stroke="#000" strokeWidth="1.900" strokeDasharray="3 2" /></Svg>,
  <Svg w={26} h={26}><path d={ZIG} stroke="#1766f5" strokeWidth="1.700" /></Svg>,
  <Svg w={26} h={26}><path d="M20 3L7 9l11 5L2 21" stroke="#f01515" strokeWidth="2" /><circle cx="20.500" cy="19.500" r="3.700" fill="#fff" stroke="#222" /><path d="M20.500 17v2.500h2" stroke="#222" strokeWidth=".9" /></Svg>,
  <Svg w={26} h={26}><path d={ZIG} stroke="#f01515" strokeWidth="1.900" /></Svg>,
  <Svg w={26} h={26}><path d={DIAG} stroke="#6cf23c" strokeWidth="1.900" /></Svg>,
  <Svg w={26} h={26}><path d={DIAG} stroke="#77660f" strokeWidth="1.900" /></Svg>,
  <Svg w={26} h={26}><path d={DIAG} stroke="#6a34a8" strokeWidth="1.900" /></Svg>,
];

function Connections() {
  return (
    <div className="flex w-[671px] shrink-0 flex-col border-l border-r border-t border-[#7d8288] bg-white">
      <div className="flex h-[53px] items-start gap-[5px] pl-[2px] pt-[1px]">
        {CABLES.map((c, i) => (
          <div key={i} className="flex h-[28px] w-[28px] shrink-0 items-center justify-center rounded-[4px] border border-[#c3c3c3] bg-[#e5e5e5]">{c}</div>
        ))}
      </div>
      <div className="flex h-[17px] items-center bg-[#f0f0f0] pl-[17px]"><div className="h-[5px] w-[205px] bg-[#868686]" /></div>
      <div className="flex flex-1 items-center justify-center border border-black pr-[1px] pt-[2px] text-[10.7px] leading-none">Automatically Choose Connection Type</div>
    </div>
  );
}

function Scenario() {
  return (
    <div className="flex w-[163px] shrink-0 flex-col items-center bg-white text-[10.7px]">
      <div className="mt-[7px] flex h-[20px] w-full items-center pl-[26px]">
        <Svg w={17} h={17}><circle cx="9.500" cy="8.500" r="7.500" fill="#2d5766" /><circle cx="8" cy="8.500" r="7.500" fill="#8bb5c3" stroke="#577f8d" /><path d="M8 4v2M8 7.500v5.500" stroke="#e6d51e" strokeWidth="2.200" /></Svg>
        <div className="ml-[20px] flex h-[21px] w-[76px] items-center justify-between rounded-[2px] border border-b-2 border-[#d8d8d8] border-b-[#a8a8a8] pl-[3px] pr-[5px]">
          <span className="whitespace-nowrap leading-none">Scenario 0</span>
          <Svg w={8} h={5}><path d="M.5.500L4 4 7.500.5" stroke="#555" /></Svg>
        </div>
      </div>
      <div className="mt-[6px] flex w-full gap-[2px] pl-[5.500px]">
        <Btn className="h-[22px] w-[75px]">New</Btn>
        <Btn className="h-[22px] w-[75px]">Delete</Btn>
      </div>
      <Btn className="mr-[1px] mt-[5px] h-[22px] w-[124px] border-b-2">Toggle PDU List Window</Btn>
    </div>
  );
}

const PDUS: [string, string, string, string, string][] = [
  ['Successful', 'PC0', 'PC3', BLUE, '0'],
  ['Successful', 'PC1', 'PC2', ORANGE, '1'],
  ['In Progress', 'PC1', 'PC3', BROWN, '2'],
];

function PduTable() {
  return (
    <div className="flex-1 border border-[#9da3ad] bg-white text-[10.7px]">
      <div className="grid h-[21px] grid-cols-[37px_65px_45px_67px_37px_37px_59px_52px_37px_37px_87px] leading-[22.500px] [&>span]:whitespace-nowrap [&>span]:border-r [&>span]:border-[#e4e4e4] [&>span]:pl-[4px]">
        {['Fire', 'Last Status', 'Source', 'Destination', 'Type', 'Color', 'Time(sec)', 'Periodic', 'Num', 'Edit', 'Delete'].map((h) => <span key={h}>{h}</span>)}
      </div>
      {PDUS.map(([st, src, dst, color, num], i) => (
        <div key={num} className={`grid h-[19.700px] grid-cols-[37px_65px_45px_67px_37px_37px_59px_52px_37px_37px_87px] text-center leading-[16.500px] ${i === 0 ? 'bg-[#d9d9d9]' : ''}`}>
          <span className="flex items-end justify-end pb-[2px]"><Svg w={14} h={13}><ellipse cx="7" cy="7" rx="6.800" ry="5.500" fill={i === 0 ? '#22384f' : '#3a1111'} /><ellipse cx="6.500" cy="5.500" rx="4.500" ry="3.500" fill={i === 0 ? '#a1253b' : '#e01b1b'} /></Svg></span>
          <span className="whitespace-nowrap pl-px">{st}</span>
          <span>{src}</span>
          <span className="pl-[2px]">{dst}</span>
          <span className="pl-px">ICMP</span>
          <span className="flex items-end pl-[3px]"><span className={`mb-[3px] h-[12px] w-[12px] ${color}`} /></span>
          <span>0.000</span>
          <span>N</span>
          <span>{num}</span>
          <span>(edit)</span>
          <span>(delete)</span>
        </div>
      ))}
    </div>
  );
}

function PacketTracer() {
  return (
    <div className="ml-[169px] flex h-[889.500px] w-[1582px] flex-col bg-white text-[#1b1b1b] [font-family:'Liberation_Sans',Arial,sans-serif]">
      <TracerTitle />
      <MenuBar />
      <ToolRowOne />
      <ToolRowTwo />
      <ViewBar />
      <div className="flex h-[654px] shrink-0 border-b border-[#8f9399]">
        <Canvas />
        <SimulationPanel />
      </div>
      <TimeBar />
      <div className="flex min-h-0 flex-1 bg-[#f0f0f0]">
        <DevicePicker />
        <div className="w-px" />
        <Connections />
        <div className="ml-[3px] flex w-[11px] items-center justify-center border-l border-t-2 border-[#9b9b9b] bg-[#f3f3f3]">
          <Svg w={6} h={8}><path d="M0 0v8l6-4z" fill="#555" /></Svg>
        </div>
        <div className="w-[2px]" />
        <Scenario />
        <PduTable />
      </div>
    </div>
  );
}

/* ---------- Taskbar ---------- */

const Task = ({ children, run, active }: { children: React.ReactNode; run?: boolean; active?: boolean }) => (
  <div className={`flex h-full w-[62px] shrink-0 flex-col items-center ${active ? 'bg-[#4a4b4c]' : ''}`}>
    <div className="flex flex-1 items-center pt-[2px]">{children}</div>
    <div className={`h-[3px] ${active ? 'w-full' : 'w-[51px]'} ${run || active ? 'bg-[#92a2c6]' : ''}`} />
  </div>
);

function Taskbar() {
  return (
    <div className="flex h-[50px] shrink-0 bg-[#1f2022] text-white">
      <div className="flex w-[60px] items-center justify-center">
        <Svg w={20} h={20}><path d="M0 3l8.300-1.200V9.500H0zM9.300 1.600L20 0v9.500H9.300zM0 10.500h8.300v7.700L0 17zM9.300 10.500H20V20L9.300 18.400z" fill="#fff" /></Svg>
      </div>
      <div className="flex w-[360px] items-center border border-[#b6b6b6] bg-[#f2f2f2] pl-[14px] text-[#3a3a3a]">
        <Svg w={21} h={20}><circle cx="13" cy="7.500" r="6.700" stroke="#1c1c1c" strokeWidth="1.600" /><path d="M8.500 12.500L1 19.500" stroke="#1c1c1c" strokeWidth="1.700" /></Svg>
        <span className="ml-[14px] w-[240px] whitespace-nowrap text-[18px] leading-none tracking-[-0.11px]">Type here to search</span>
        <Svg w={36} h={45} className="mt-[1px]">
          <defs><linearGradient id="steel" x1="0" x2="1"><stop offset="0" stopColor="#6b6862" /><stop offset=".4" stopColor="#a19f9b" /><stop offset="1" stopColor="#6f6c68" /></linearGradient></defs>
          <path d="M1 18Q3 3 16 1q12 1 15 14 2 10 2 20l2 9-10-1-4-8-4 7-8 2Q1 37 0 27z" fill="url(#steel)" />
          <path d="M24 16l7-1 2 12-2 14-6-2-2-10z" fill="#8d8a86" />
          <path d="M4 10q12-4 25 1M13 16h18M25 5l4 36M23 16v22M22 24h10M22 32h11" stroke="#dddbd6" strokeWidth="1.400" />
          <path d="M7 3q7-3 9 4l-3 4q-4-5-8-2z" fill="#b98f3a" />
          <path d="M10 9l-2 14-4 13 4 6 6-5-2-14z" fill="#ccb06a" />
          <path d="M0 20l9 1 12-1.500v1.500l-12 2-9-1z" fill="#b1301f" />
          <path d="M2 23l6 1-2 4zM12 24l8-1-4 5z" fill="#1d1a17" />
          <path d="M5 35q4-2 9 0l-4 2z" fill="#7c3d21" />
          <path d="M11 2q2 8 0 17" stroke="#b98a2a" strokeWidth="2.200" />
        </Svg>
      </div>
      <div className="flex w-[61px] items-center justify-center">
        <Svg w={21} h={20}><path d="M1 0v3h12V0M1 5.500h12v9H1zM1 20v-3h12v3M18.500 0v5M18.500 11v9" stroke="#fff" strokeWidth="1.300" /><path d="M17 6.500h3v3h-3z" fill="#fff" /></Svg>
      </div>
      <div className="ml-[2px] flex w-[237px] shrink-0 items-center">
        <div className="flex w-[62px] justify-center">
          <Svg w={30} h={30}>
            <defs>
              <linearGradient id="edgeA" x1="0" x2="1"><stop offset="0" stopColor="#2aa5e6" /><stop offset=".6" stopColor="#35c1c7" /><stop offset="1" stopColor="#6fe04c" /></linearGradient>
              <linearGradient id="edgeB" y1="0" y2="1" x2="0"><stop offset="0" stopColor="#0f77cf" /><stop offset="1" stopColor="#0b57a8" /></linearGradient>
            </defs>
            <path d="M0 15A15 15 0 0 1 15 0c9 0 15 6 15 12 0 5-3 8-8 8-4 0-5-2-4-3 3-3 1-8-5-8C6 9 1 12 0 15z" fill="url(#edgeA)" />
            <path d="M0 15q3-6 11-6-3 2-3 8c0 8 8 11 14 9q3-1 5-2-4 6-12 6A15 15 0 0 1 0 15z" fill="#1683d8" />
            <path d="M11 11q-4 3-2 9 4 7 13 5 3-.5 5-2-2 5-9 7-8-1-10-8-2-8 3-11z" fill="url(#edgeB)" />
          </Svg>
        </div>
        <div className="flex w-[61px] justify-center">
          <Svg w={31} h={28}><path d="M0 9L15.500 0 31 9v2H0z" fill="#0b5fb5" /><path d="M0 9h31v19H0z" fill="#37c2f5" /><path d="M2 9h27L15.500 18z" fill="#f3f3f3" /><path d="M0 9l31 19H0z" fill="#1f9be8" /><path d="M2 9h27L15.500 18z" fill="#f3f3f3" /></Svg>
        </div>
        <div className="flex w-[64px] justify-center">
          <Svg w={31} h={27}><path d="M8 0l7.500 5L8 10 .5 5zM23 0l7.500 5-7.500 5-7.500-5zM8 10l7.500 5L8 20 .5 15zM23 10l7.500 5-7.500 5-7.500-5zM15.500 16.500L23 21.500l-7.500 5-7.500-5z" fill="#fff" /></Svg>
        </div>
        <div className="flex flex-1 justify-center pl-[9px]">
          <Svg w={14} h={30}><path d="M11 0L7 9v3l7 6q0 3-3 5L2 30l4-9-1-3L0 13q0-3 2-5z" fill="#fff" /><path d="M12.500 1L8 9M1 29l5-7" stroke="#222" strokeWidth="1" /></Svg>
        </div>
      </div>
      <div className="ml-[11px] flex h-full">
        <Task run><Svg w={28} h={23}><path d="M0 1.500Q0 0 1.500 0h9L13 3H0z" fill="#d99a06" /><path d="M0 3h28v18.500H0z" fill="#fdd45e" /><path d="M5 23v-9.500Q5 12 6.500 12h15q1.500 0 1.500 1.500V23h-5v-6h-8v6z" fill="#3e9ad8" /></Svg></Task>
        <Task run>
          <Svg w={29} h={29}>
            <defs><linearGradient id="fox" x1=".8" y1="0" x2=".3" y2="1"><stop offset="0" stopColor="#ffe23f" /><stop offset=".45" stopColor="#ff8a1d" /><stop offset="1" stopColor="#ef2a55" /></linearGradient></defs>
            <path d="M4 4l2 4q2-1 3-5l3 4 4 0q1-4 3-7 1 4 4 7 0-2 0-3 6 5 5.500 12A14 14 0 0 1 1 19Q-1 10 4 4z" fill="url(#fox)" />
            <circle cx="15" cy="15.500" r="6" fill="#7a3fd8" />
            <path d="M3 11q4-4 9 0l4 1q-1 3-4 3-3 3 1 6-6 0-8-5z" fill="#ff7a20" />
          </Svg>
        </Task>
        <Task>
          <Svg w={30} h={30}><circle cx="14.500" cy="14" r="14.300" fill="#8110d8" /><path d="M4 14q0-5 5-5 3 0 5.500 1.500Q17 9 20 9q5 0 5 5t-5 5q-3 0-5.500-3Q12 19 9 19q-5 0-5-5z" fill="#fff" /><ellipse cx="10" cy="14" rx="2.300" ry="1.800" fill="#8110d8" /><ellipse cx="19" cy="14" rx="2.300" ry="1.800" fill="#8110d8" /><circle cx="22.500" cy="22.500" r="7" fill="#ff7a22" /><path d="M16 18q6-6 13 2l-4-5z" fill="#ffd53c" /><circle cx="22.500" cy="22.500" r="3" fill="#7f3bc0" /></Svg>
        </Task>
        <Task run>
          <Svg w={30} h={28}><path d="M7 0h23v7H7z" fill="#41a5ee" /><path d="M7 7h23v7H7z" fill="#2b7cd3" /><path d="M7 14h23v7H7z" fill="#185abd" /><path d="M7 21h23v7H7z" fill="#103f91" /><rect y="6" width="16" height="16" rx="1.500" fill="#185abd" /><text x="8" y="18.500" fontSize="12.500" fontWeight="bold" textAnchor="middle" fill="#fff">W</text></Svg>
        </Task>
        <Task run>
          <Svg w={30} h={29}><defs><linearGradient id="fin" y1="0" y2="1" x2="0"><stop offset="0" stopColor="#1c87f5" /><stop offset="1" stopColor="#0c4cb5" /></linearGradient></defs><path d="M0 28Q3 4 29 0q-5 15 0 28z" fill="url(#fin)" stroke="#87a9cf" strokeWidth=".8" /><path d="M1 28l2-4q6 2 12 0t13 2v2z" fill="#7fb0e8" /></Svg>
        </Task>
        <Task run>
          <Svg w={32} h={31}><circle cx="15" cy="15" r="14.500" fill="#34a853" /><path d="M2.500 8A14.500 14.500 0 0 1 28 8H15q-5 0-6.500 4z" fill="#ea4335" /><path d="M28 8a14.500 14.500 0 0 1-12.500 21.500L21 19q3-6-2-11z" fill="#fbbc05" /><path d="M2.500 8L9 19l6 2 1 8.500A14.500 14.500 0 0 1 2.500 8z" fill="#34a853" /><circle cx="15" cy="15" r="7" fill="#fff" /><circle cx="15" cy="15" r="5.500" fill="#4285f4" /><circle cx="22.500" cy="21.500" r="9.500" fill="#8c8681" /><ellipse cx="22" cy="22" rx="4.500" ry="6" fill="#c79b86" /><path d="M16 19q2-8 9-6 4 2 2 7-3-4-6-4-3 0-5 3z" fill="#2c2522" /><path d="M16 28q6-4 12 0-6 5-12 0z" fill="#e6e2e0" /></Svg>
        </Task>
        <div className="w-[1px]" />
        <Task active>
          <Svg w={28} h={28} className="mr-[2px]"><rect width="28" height="28" rx="1.500" fill="#2cabec" /><path d="M13 28l8-14 7 7v7z" fill="#6b8ad6" /><path d="M0 22L9 11l15 17H0z" fill="#1b4b8f" /><circle cx="18.500" cy="6.500" r="2.700" fill="#fff" /></Svg>
        </Task>
      </div>
      <div className="ml-auto flex items-center">
        <Svg w={28} h={28} className="mt-[3px]"><circle cx="14" cy="14" r="12.500" fill="#0d9ade" stroke="#fff" strokeWidth="3" /><path d="M9.800 11q0-4.500 4.200-4.500t4.200 4q0 2-2 3.500T14 17.500" stroke="#fff" strokeWidth="2.800" /><circle cx="14" cy="21.300" r="1.800" fill="#fff" /></Svg>
        <Svg w={16} h={9} className="ml-[13px]"><path d="M.7 8.500L8 1l7.300 7.500" stroke="#fff" strokeWidth="1.300" /></Svg>
        <Svg w={19} h={12} className="ml-[13px]"><path d="M.6.600h16v10.800h-16z" stroke="#fff" strokeWidth="1.200" /><path d="M2.300 2.300h11.500v7.400H2.300zM17 4h2v4h-2z" fill="#fff" /></Svg>
        <Svg w={15} h={18} className="ml-[14px]"><rect x=".7" y="4" width="8.600" height="10" rx="1.500" stroke="#fff" strokeWidth="1.200" /><path d="M9.500 8l4-2v6l-4-2M2 1.500q4-2 8 0M2 16.500q4 2 8 0" stroke="#fff" strokeWidth="1.100" /></Svg>
        <Svg w={21} h={20} className="ml-[11px]"><path d="M12 17H1V4.500L19 1v11" stroke="#fff" strokeWidth="1.200" /><path d="M6 9q1-3 4-3 2 0 3 1.500V5.500M13 10q-1 4-4 4-2 0-3-1.500V15" stroke="#fff" strokeWidth="1.200" /><circle cx="15.500" cy="15.500" r="4.500" fill="#ff9a0b" /></Svg>
        <span className="ml-[13px] w-[29px] text-[14.5px] leading-none tracking-[-0.5px]">ENG</span>
        <div className="ml-[15px] flex w-[77px] flex-col items-center whitespace-nowrap text-[14.6px] leading-[23px]">
          <span className="tracking-[-0.6px]">13:06</span>
          <span className="tracking-[-0.12px]">11-05-2023</span>
        </div>
        <Svg w={32} h={32} className="ml-[22px] mt-[5px]"><path d="M0 1h20v16H7l-4 4v-4H0z" fill="#fff" /><path d="M4 5h12M4 9h12M4 13h8" stroke="#333" strokeWidth="1.200" /><circle cx="19.500" cy="20.500" r="10" fill="#2b2c2e" fillOpacity=".93" stroke="#8d8d8d" /><text x="19.500" y="25.500" fontSize="14" textAnchor="middle" fill="#fff">1</text></Svg>
        <div className="ml-[14px] mr-[4px] h-[50px] w-px bg-[#5b5c5e]" />
      </div>
    </div>
  );
}

export default function App() {
  return (
    <div className="flex h-[1080px] w-[1920px] flex-col overflow-hidden bg-white text-black [font-family:'Open_Sans','Noto_Sans',sans-serif]">
      <TitleBar />
      <PhotosToolbar />
      <PacketTracer />
      <div className="flex flex-1 items-start justify-end pr-[19px]">
        <Svg w={22} h={22}><path d="M1.500 20.500l19-19M13.500 1.200H20.800V8.500M1.200 13.500v7.300H8.500" stroke="#111" strokeWidth="1.500" /></Svg>
      </div>
      <Taskbar />
    </div>
  );
}
